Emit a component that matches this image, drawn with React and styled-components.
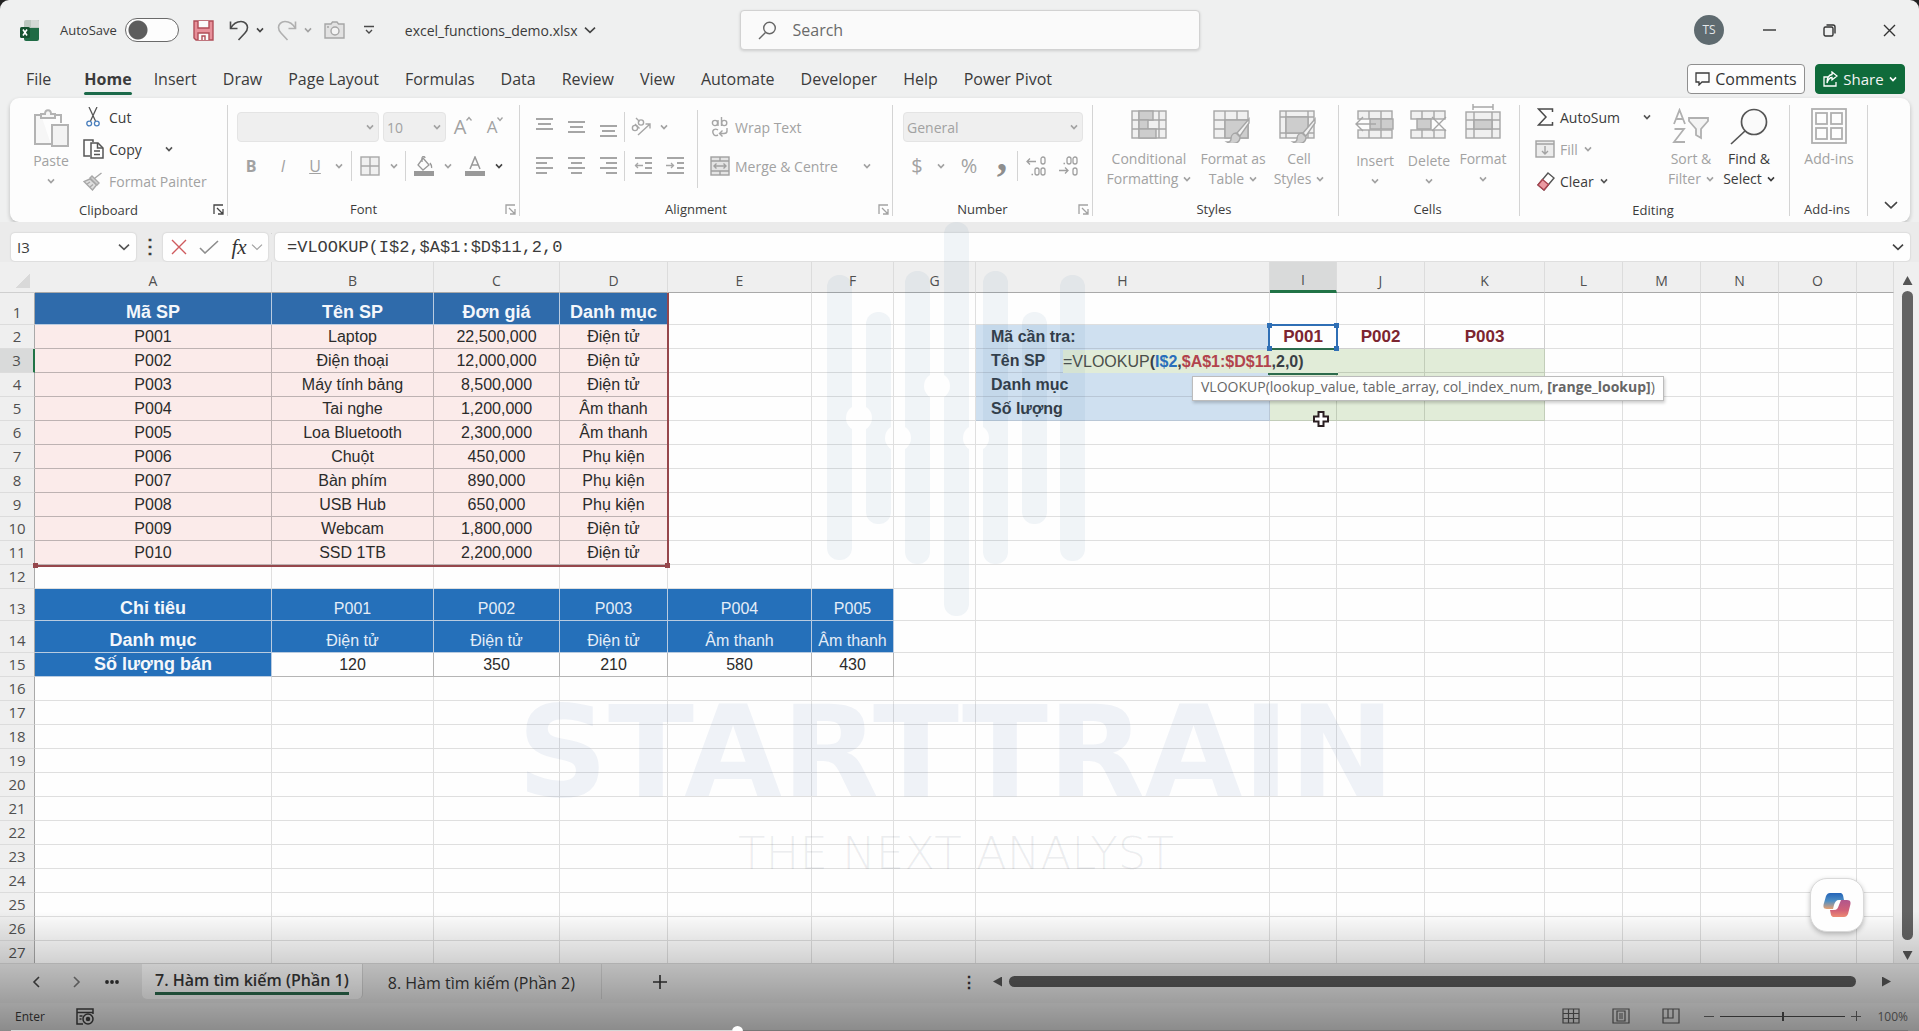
import React from 'react';
import styled, { createGlobalStyle, css } from 'styled-components';

const INK = '#3b3b3b';
const DIM = '#a2a2a2';
const UI_FONT = '"Open Sans", "Noto Sans", sans-serif';
const CELL_FONT = '"Liberation Sans", Arial, sans-serif';

const GlobalStyle = createGlobalStyle`
  * {
    box-sizing: border-box;
  }

  html {
    background: #222;
  }

  body {
    margin: 0;
    font-family: ${UI_FONT};
    color: ${INK};
    overflow: hidden;
  }

  button,
  input,
  select {
    font: inherit;
    color: inherit;
    margin: 0;
    padding: 0;
    border: none;
    background: none;
    outline: none;
  }
`;

/* ---------- icons ---------- */

const Icon = ({ w = 20, h = 20, color = DIM, sw = 1.4, children }) => (
  <svg
    width={w}
    height={h}
    viewBox={`0 0 ${w} ${h}`}
    fill="none"
    stroke={color}
    strokeWidth={sw}
    aria-hidden="true"
  >
    {children}
  </svg>
);

const Chevron = ({ color = DIM, size = 8, sw = 1.6 }) => (
  <Icon w={size} h={size} color={color} sw={sw}>
    <path d={`M1 ${size * 0.3} L${size / 2} ${size * 0.7} L${size - 1} ${size * 0.3}`} />
  </Icon>
);

const ExcelIcon = () => (
  <svg width="20" height="21" viewBox="0 0 20 21" aria-hidden="true">
    <path d="M4 2a2 2 0 0 1 2-2h13v8H4z" fill="#bcc8c0" />
    <path d="M11 0h6a2 2 0 0 1 2 2v5h-8z" fill="#d3d9d5" />
    <path d="M4 8h15v11a2 2 0 0 1-2 2H6a2 2 0 0 1-2-2z" fill="#1f6b45" />
    <rect x="0" y="7" width="10" height="11" rx="1.5" fill="#14512f" />
    <path d="M3 9.5l4 6M7 9.5l-4 6" stroke="#fff" strokeWidth="1.6" />
  </svg>
);

const SaveIcon = () => (
  <Icon w={21} h={21} color="#b04c57" sw={1.4}>
    <path d="M1 1h19v19H3l-2-2z" fill="#e7909a" />
    <path d="M5 1v7h11V1" fill="#fafafa" />
    <path d="M5 20v-7h11v7" fill="#fafafa" />
    <path d="M9 20v-4h3v4" />
  </Icon>
);

const UndoIcon = () => (
  <Icon w={20} h={21} color="#4a4a4a" sw={1.6}>
    <path d="M1.500 1.500v7h7" />
    <path d="M1.500 8.500C4 4 8 1.500 12 1.500c4 0 6.500 3 6.500 6 0 2-.7 3.500-2.500 5.500l-6.500 7" />
  </Icon>
);

const RedoIcon = () => (
  <Icon w={20} h={21} color="#b0b0b0" sw={1.6}>
    <path d="M18.500 1.500v7h-7" />
    <path d="M18.500 8.500C16 4 12 1.500 8 1.500c-4 0-6.500 3-6.500 6 0 2 .7 3.500 2.500 5.500l6.500 7" />
  </Icon>
);

const CameraIcon = () => (
  <Icon w={21} h={18} color="#a6a6a6">
    <path d="M1 3h6l1.500-2H13l1.500 2H20v14H1z" fill="#e2e2e2" />
    <circle cx="11" cy="10" r="4" fill="#f4f4f4" />
    <path d="M3 6h2" />
  </Icon>
);

const CustomizeIcon = () => (
  <Icon w={10} h={10} color="#4a4a4a">
    <path d="M0 1.500h10M2 5l3 3 3-3" />
  </Icon>
);

const SearchIcon = () => (
  <Icon w={19} h={19} color="#666">
    <circle cx="11.500" cy="7" r="5.800" />
    <path d="M7.500 11.500L1 18" />
  </Icon>
);

const PasteIcon = () => (
  <Icon w={36} h={38} color="#b3b3b3" sw={2}>
    <path d="M8 6H2v29h16" fill="#f6f6f6" />
    <path d="M22 6h6v8" />
    <path d="M8 9V5h4c0-5 6-5 6 0h4v4z" fill="#f6f6f6" />
    <rect x="19" y="16" width="16" height="21" fill="#f3f3f3" />
  </Icon>
);

const CutIcon = () => (
  <Icon w={14} h={20} color="#555" sw={1.3}>
    <path d="M3 0l6.500 14M11 0L4.500 14" />
    <circle cx="3.200" cy="16.500" r="2.400" stroke="#4a7fbd" />
    <circle cx="10.800" cy="16.500" r="2.400" stroke="#4a7fbd" />
  </Icon>
);

const CopyIcon = () => (
  <Icon w={21} h={20} color="#555" sw={1.5}>
    <path d="M7 17H1V1h9v2" />
    <path d="M8 4h7l5 5v10H8z" fill="#fff" />
    <path d="M14.500 4v5H20M11 12h6M11 15.500h6" />
  </Icon>
);

const PainterIcon = () => (
  <Icon w={20} h={19} color="#a8a8a8" sw={1.4}>
    <path d="M18.500 1L12 6M9 4l7 7-2 2-7-7z" fill="#cfcfcf" />
    <path d="M7 7L1 9.500l8.500 8.500 4-5z" fill="#dedede" />
    <path d="M4 12l3-2M7 15l3-2.500" />
  </Icon>
);

const BordersIcon = () => (
  <Icon w={20} h={20} color="#a8a8a8">
    <rect x="1" y="1" width="18" height="18" fill="#f0f0f0" />
    <path d="M10 1v18M1 10h18" />
  </Icon>
);

const BucketIcon = () => (
  <Icon w={20} h={20} color="#999" sw={1.3}>
    <path d="M9 2l6 7-6 5-5-5z" />
    <path d="M8 6V2c0-2 3-2 3 0M16 7c1.500 2 2 3 1.500 5" />
    <path d="M0 17.500h20" strokeWidth="5" />
  </Icon>
);

const FontColorIcon = () => (
  <Icon w={20} h={20} color="#999" sw={1.5}>
    <path d="M5 13L10 1l5 12M6.500 9h7" />
    <path d="M0 17.500h20" strokeWidth="5" />
  </Icon>
);

const LinesIcon = ({ lines, arrow }) => (
  <Icon w={19} h={20} color="#a6a6a6" sw={2}>
    {lines.map(([x1, x2, y]) => (
      <path key={y} d={`M${x1} ${y}H${x2}`} />
    ))}
    {arrow && <path d={arrow} strokeWidth="1.300" />}
  </Icon>
);

const TOP = [[1, 18, 2], [3, 16, 7], [1, 18, 12]];
const MIDDLE = [[1, 18, 5], [3, 16, 10], [1, 18, 15]];
const BOTTOM = [[1, 18, 9], [3, 16, 14], [1, 18, 19]];
const LEFT = [[1, 18, 2], [1, 12, 7], [1, 18, 12], [1, 12, 17]];
const CENTRE = [[1, 18, 2], [4, 15, 7], [1, 18, 12], [4, 15, 17]];
const RIGHT = [[1, 18, 2], [7, 18, 7], [1, 18, 12], [7, 18, 17]];
const INDENT = [[1, 18, 2], [11, 18, 7], [11, 18, 12], [1, 18, 17]];

const OrientationIcon = () => (
  <Icon w={22} h={20} color="#a6a6a6" sw={1.4}>
    <circle cx="5" cy="11" r="2.600" />
    <path d="M5 7l4.500 4.500" />
    <circle cx="11" cy="5.500" r="2.600" />
    <path d="M6 1l3.500 3.500M8 18L20 7M15.500 7H20v4.500" />
  </Icon>
);

const WrapIcon = () => (
  <Icon w={18} h={20} color="#a6a6a6" sw={1.4}>
    <circle cx="4" cy="6" r="2.600" />
    <path d="M7 3v6M10.500 0v9" />
    <circle cx="13.200" cy="6" r="2.600" />
    <path d="M7 13c-3-2-6 0-5 3s3 3 5 2M16 11v3c0 2-1 2.500-3 2.500H9M11.500 13.500l-3 3 3 3" />
  </Icon>
);

const MergeIcon = () => (
  <Icon w={20} h={20} color="#a0a0a0">
    <rect x="1" y="1" width="18" height="18" fill="#e4e4e4" />
    <path d="M1 5h18M1 15h18M10 1v4M10 15v4M4 10h12M6.500 7.500L4 10l2.500 2.500M13.500 7.500L16 10l-2.500 2.500" />
  </Icon>
);

const DecimalIcon = ({ more }) => (
  <Icon w={20} h={20} color="#a0a0a0" sw={1.3}>
    <path d={more ? 'M1 5.500h9M4 2.500L1 5.500l3 3' : 'M1 14.500h9M7 11.500l3 3-3 3'} />
    <rect x="15" y="1" width="4" height="7" rx="2" />
    <rect x="15" y="12" width="4" height="7" rx="2" />
    {more ? <rect x="9" y="12" width="4" height="7" rx="2" /> : <rect x="9" y="1" width="4" height="7" rx="2" />}
    <path d={more ? 'M5.500 18.500h1.500' : 'M5.500 7.500h1.500'} />
  </Icon>
);

const BRUSH = (
  <>
    <path d="M36 10L24 24l3 3 9-13z" fill="#f2f2f2" />
    <path d="M23 24c-4 0-5 4-5 6s-2 3-4 3c5 3 13 2 13-5z" fill="#cfcfcf" />
  </>
);

const ConditionalIcon = () => (
  <Icon w={36} h={34} color="#a6a6a6">
    <rect x="1" y="2" width="34" height="27" fill="#f0f0f0" />
    <path d="M1 11h34M1 20h34M8 2v27M28 2v27" />
    <rect x="8" y="2" width="14" height="9" fill="#cdcdcd" />
    <rect x="8" y="11" width="9" height="9" fill="#cdcdcd" />
    <rect x="8" y="20" width="17" height="9" fill="#cdcdcd" />
  </Icon>
);

const FormatTableIcon = () => (
  <Icon w={40} h={34} color="#a6a6a6">
    <rect x="1" y="2" width="34" height="27" fill="#f0f0f0" />
    <path d="M1 11h34M1 20h34M12 2v27M24 2v27" />
    <path d="M12 11h23v18H12z" fill="#cdcdcd" />
    {BRUSH}
  </Icon>
);

const CellStylesIcon = () => (
  <Icon w={40} h={34} color="#a6a6a6">
    <rect x="1" y="2" width="34" height="27" fill="#f0f0f0" />
    <path d="M1 8h34M7 2v27M29 2v27M1 24h34" />
    <rect x="7" y="8" width="22" height="16" fill="#cdcdcd" />
    {BRUSH}
  </Icon>
);

const InsertIcon = () => (
  <Icon w={40} h={34} color="#a6a6a6">
    <rect x="3" y="2" width="34" height="8" fill="#f0f0f0" />
    <rect x="3" y="21" width="34" height="8" fill="#f0f0f0" />
    <path d="M14 2v8M26 2v8M14 21v8M26 21v8" />
    <rect x="15" y="10" width="23" height="10" fill="#cdcdcd" />
    <path d="M26 10v10M1 15h20M8 8l-7 7 7 7" />
  </Icon>
);

const DeleteIcon = () => (
  <Icon w={40} h={34} color="#a6a6a6">
    <rect x="2" y="2" width="34" height="8" fill="#f0f0f0" />
    <rect x="2" y="21" width="34" height="8" fill="#f0f0f0" />
    <path d="M13 2v8M25 2v8M13 21v8M25 21v8" />
    <rect x="8" y="10" width="14" height="10" fill="#cdcdcd" />
    <path d="M23 8l14 14M37 8L23 22" />
  </Icon>
);

const FormatIcon = () => (
  <Icon w={36} h={39} color="#a6a6a6">
    <path d="M8 3h20M8 0v6M28 0v6" />
    <rect x="1" y="8" width="34" height="26" fill="#f0f0f0" />
    <path d="M1 16h34M1 25h34M9 8v26M27 8v26" />
    <rect x="9" y="16" width="18" height="9" fill="#cdcdcd" />
  </Icon>
);

const SigmaIcon = () => (
  <Icon w={17} h={18} color="#4a4a4a" sw={1.5}>
    <path d="M15.500 4V1H1.500L9 9l-7.500 8h14v-3" />
  </Icon>
);

const FillIcon = () => (
  <Icon w={20} h={18} color={DIM}>
    <rect x="1" y="1" width="18" height="16" fill="#ececec" />
    <path d="M1 4h18M10 6v8M7 11l3 3 3-3" />
  </Icon>
);

const EraserIcon = () => (
  <Icon w={19} h={19} color="#555">
    <path d="M12 1l6 5L8 18l-6-5z" fill="#fff" />
    <path d="M6.500 7.500l6 5L8 18l-6-5z" fill="#eb9aa2" stroke="#a8434f" />
  </Icon>
);

const SortIcon = () => (
  <Icon w={38} h={36} color="#b0b0b0" sw={1.8}>
    <path d="M2 16L7.500 2 13 16M4 11h7M2.500 21H12L2 34h11" />
    <path d="M17 10h19v3l-7 8v9l-5-3v-6l-7-8z" fill="#f4f4f4" />
  </Icon>
);

const FindIcon = () => (
  <Icon w={38} h={37} color="#555" sw={1.7}>
    <circle cx="24" cy="14" r="12.500" fill="#fafafa" />
    <path d="M15 23L1 36" />
  </Icon>
);

const AddinsIcon = () => (
  <Icon w={36} h={36} color="#b0b0b0" sw={1.8}>
    <rect x="1" y="1" width="34" height="34" />
    <rect x="5" y="5" width="11" height="11" />
    <rect x="20" y="5" width="11" height="11" />
    <rect x="5" y="20" width="11" height="11" />
    <rect x="20" y="20" width="11" height="11" />
  </Icon>
);

const LauncherIcon = ({ color }) => (
  <Icon w={11} h={11} color={color} sw={1.3}>
    <path d="M1 10V1h9M4 4l6 6M10 5v5H5" />
  </Icon>
);

const CommentIcon = () => (
  <Icon w={15} h={14} color="#3b3b3b" sw={1.3}>
    <path d="M1 1h13v9H7l-3 3v-3H1z" />
  </Icon>
);

const ShareIcon = () => (
  <Icon w={15} h={16} color="#fff" sw={1.3}>
    <path d="M5 6H1v9h12v-4" />
    <path d="M9 1l5 4-5 4V6.500C6 6.500 5 9 4 12c0-5 1-8 5-8.500z" />
  </Icon>
);

const CopilotIcon = () => (
  <svg width="28" height="26" viewBox="0 0 28 26" aria-hidden="true">
    <defs>
      <linearGradient id="cpBlue" x1="0" y1="0" x2="0" y2="1">
        <stop offset="0" stopColor="#2464b8" />
        <stop offset="0.5" stopColor="#4f8fc4" />
        <stop offset="1" stopColor="#e8a070" />
      </linearGradient>
      <linearGradient id="cpPink" x1="0" y1="0" x2="0" y2="1">
        <stop offset="0" stopColor="#b0568c" />
        <stop offset="0.6" stopColor="#d06078" />
        <stop offset="1" stopColor="#ee8a72" />
      </linearGradient>
    </defs>
    <path d="M7 1h10c3 0 3 2 4 7h-5c-3 0-4 2-5 5l-1 4H4c-4 0-4-3-3-6l2-7c1-2 2-3 4-3z" fill="url(#cpBlue)" />
    <path d="M21 25H11c-3 0-3-2-4-7h4c3 0 4-2 5-5l2-5h6c4 0 4 3 3 6l-2 8c-1 2-2 3-4 3z" fill="url(#cpPink)" />
  </svg>
);

const MacroIcon = () => (
  <Icon w={18} h={17} color="#3f3f3f" sw={1.5}>
    <path d="M7 16H1V1h16v5M1 4.500h16M3.500 8h3M3.500 11h2" />
    <circle cx="12" cy="11" r="5" />
    <circle cx="12" cy="11" r="1.500" fill="#3f3f3f" />
  </Icon>
);

const NormalViewIcon = () => (
  <Icon w={18} h={16} color="#5e5e5e" sw={1.2}>
    <path d="M1 1h16v14H1zM1 5.500h16M1 10.500h16M6.500 1v14M11.500 1v14" />
  </Icon>
);

const PageViewIcon = () => (
  <Icon w={18} h={16} color="#5e5e5e" sw={1.2}>
    <path d="M1 1h16v14H1zM5 3h8v10H5zM7 6h4M7 8h4M7 10h4" />
  </Icon>
);

const BreakViewIcon = () => (
  <Icon w={18} h={16} color="#5e5e5e" sw={1.2}>
    <path d="M1 1h16v14H1zM6 1v9H1M11 1v9H6" />
  </Icon>
);

/* ---------- title bar and tabs ---------- */

const Window = styled.div`
  position: relative;
  display: flex;
  flex-direction: column;
  height: 100vh;
  background: #eff0f0;
  border-radius: 9px 9px 0 0;
  overflow: hidden;
`;

const TitleBar = styled.header`
  display: grid;
  grid-template-columns: minmax(0, 1fr) 460px minmax(0, 1fr);
  align-items: center;
  height: 60px;
  padding-left: 20px;
`;

const QuickAccess = styled.div`
  display: flex;
  align-items: center;
  font-size: 13px;
`;

const AutoSave = styled.label`
  display: flex;
  align-items: center;
  gap: 8px;
  margin: 0 4px 0 20px;
`;

const Toggle = styled.input`
  appearance: none;
  width: 54px;
  height: 24px;
  border: 1px solid #6a6a6a;
  border-radius: 12px;
  background: radial-gradient(circle at 12px 11px, #5d5d5d 9px, #fdfdfd 10px);
`;

const SplitButton = styled.div`
  display: flex;
  margin-right: 6px;
`;

const IconButton = styled.button`
  display: inline-flex;
  align-items: center;
  justify-content: center;
  flex: none;
  width: ${({ $w }) => $w || 20}px;
  height: ${({ $h }) => $h || 30}px;
  color: ${({ $color }) => $color || DIM};
`;

const FileName = styled.button`
  display: flex;
  align-items: center;
  gap: 6px;
  margin-left: 17px;
  font-size: 14px;
`;

const SearchBox = styled.label`
  display: flex;
  align-items: center;
  gap: 16px;
  height: 40px;
  padding: 0 17px;
  background: #fafafa;
  border: 1px solid #d2d2d2;
  border-radius: 4px;
  box-shadow: 0 1px 3px rgba(0, 0, 0, 0.15);

  input {
    flex: 1;
    font-size: 16px;

    &::placeholder {
      color: #6a6a6a;
      opacity: 1;
    }
  }
`;

const WindowControls = styled.div`
  display: flex;
  justify-content: flex-end;
`;

const Avatar = styled.span`
  width: 30px;
  height: 30px;
  border-radius: 50%;
  background: #5f6b70;
  color: #e4e8ea;
  font-size: 12px;
  line-height: 30px;
  text-align: center;
`;

const TabRow = styled.nav`
  display: flex;
  align-items: center;
  height: 38px;
  padding: 0 14px 0 26px;
`;

const RibbonTab = styled.a`
  position: relative;
  margin-right: 26px;
  color: ${INK};
  font-size: 16px;
  line-height: 40px;
  text-decoration: none;
  white-space: nowrap;

  ${({ $active }) =>
    $active &&
    css`
      margin-left: 7px;
      margin-right: 22px;
      font-weight: 700;

      &::after {
        content: '';
        position: absolute;
        left: 0;
        right: 0;
        bottom: 4px;
        height: 3px;
        background: #1c6a4a;
        border-radius: 2px;
      }
    `}
`;

const TabAction = styled.button`
  display: flex;
  align-items: center;
  justify-content: center;
  gap: 5px;
  width: ${({ $primary }) => ($primary ? 90 : 118)}px;
  height: 30px;
  margin-left: ${({ $primary }) => ($primary ? '10px' : 'auto')};
  border: 1px solid ${({ $primary }) => ($primary ? '#0f6b3b' : '#8f8f8f')};
  border-radius: 4px;
  background: ${({ $primary }) => ($primary ? '#0f6b3b' : '#fdfdfd')};
  color: ${({ $primary }) => ($primary ? '#f4f4f4' : '#333')};
  font-size: ${({ $primary }) => ($primary ? 15 : 16)}px;
`;

/* ---------- ribbon ---------- */

const Ribbon = styled.section`
  display: flex;
  height: 124px;
  margin: 0 9px 0 10px;
  background: #fdfdfd;
  border-radius: 9px;
  box-shadow: 0 2px 4px rgba(0, 0, 0, 0.22);
`;

const GroupBox = styled.div`
  position: relative;
  display: flex;
  flex-direction: column;
  flex: none;
  width: ${({ $w }) => $w}px;
  background: linear-gradient(#d4d4d4, #d4d4d4) right 7px / 1px 111px no-repeat;
`;

const GroupBody = styled.div`
  display: flex;
  flex: 1;
  align-items: flex-start;
  padding: 3px 0 0 ${({ $pad }) => $pad || 0}px;
`;

const GroupLabel = styled.div`
  display: flex;
  align-items: center;
  gap: 6px;
  height: 26px;
  padding-right: 4px;
  font-size: 13px;

  span {
    flex: 1;
    text-align: center;
  }
`;

const Group = ({ label, width, pad, launcher, children }) => (
  <GroupBox $w={width}>
    <GroupBody $pad={pad}>{children}</GroupBody>
    <GroupLabel>
      <span>{label}</span>
      {launcher && (
        <IconButton $w={11} $h={11} aria-label={`${label} settings`}>
          <LauncherIcon color={launcher} />
        </IconButton>
      )}
    </GroupLabel>
  </GroupBox>
);

const BigButton = styled.button`
  display: flex;
  flex-direction: column;
  align-items: center;
  flex: none;
  width: ${({ $w }) => $w}px;
  height: ${({ $h }) => $h || 88}px;
  padding-top: ${({ $top }) => $top || 8}px;
  color: ${({ $color }) => $color || DIM};
  font-size: 14px;
  line-height: 20px;
  white-space: nowrap;

  svg {
    flex: none;
  }

  .text {
    margin-top: auto;
  }

  .line {
    display: flex;
    align-items: center;
    justify-content: center;
    gap: 5px;
    height: 20px;
  }
`;

const Big = ({ icon, lines, ...rest }) => (
  <BigButton {...rest}>
    {icon}
    <span className="text">
      {lines.map((line, i) => (
        <span className="line" key={line || i}>
          {line}
          {i === 1 && <Chevron color={rest.$color || DIM} />}
        </span>
      ))}
    </span>
  </BigButton>
);

const Stack = styled.div`
  display: flex;
  flex-direction: column;
  flex: none;
  width: ${({ $w }) => $w}px;
`;

const SmallButton = styled.button`
  display: flex;
  align-items: center;
  height: 32px;
  color: ${({ $color }) => $color || INK};
  font-size: 14px;
  white-space: nowrap;

  .icon {
    display: flex;
    justify-content: center;
    width: ${({ $icon }) => $icon || 20}px;
    margin-right: 5px;
  }

  .chevron {
    display: flex;
    margin-left: ${({ $gap }) => $gap || 6}px;
  }
`;

const Rows = styled.div`
  display: flex;
  flex-direction: column;
  gap: 9px;
  padding-top: 11px;
`;

const Row = styled.div`
  display: flex;
  align-items: center;
  height: 30px;

  b,
  i,
  u {
    font-size: 16px;
  }
`;

const Divider = styled.span`
  flex: none;
  width: 1px;
  height: ${({ $h }) => $h || 30}px;
  margin: ${({ $margin }) => $margin || '0 3px 0 2px'};
  background: #d4d4d4;
`;

const SelectBox = styled.label`
  position: relative;
  display: flex;
  align-items: center;
  width: ${({ $w }) => $w}px;
  height: 30px;
  margin-right: 4px;
  background: #efefef;
  border: 1px solid #e4e4e4;
  border-radius: 4px;

  select {
    appearance: none;
    width: 100%;
    padding-left: 3px;
    color: ${DIM};
    font-size: 14px;
    opacity: 1;
  }

  svg {
    position: absolute;
    right: 4px;
  }
`;

const Dropdown = ({ width, value, label }) => (
  <SelectBox $w={width}>
    <select aria-label={label} defaultValue={value}>
      <option>{value}</option>
    </select>
    <Chevron />
  </SelectBox>
);

const FontSizeGlyph = styled.span`
  display: flex;
  font-size: ${({ $size }) => $size}px;
  line-height: 26px;

  svg {
    margin-top: 2px;
  }
`;

const Symbol = styled.span`
  font-size: 20px;
  line-height: 30px;
`;

const Comma = styled.span`
  height: 30px;
  font-family: 'Liberation Serif', serif;
  font-size: 42px;
  font-weight: 700;
  line-height: 10px;
  color: #8e8e8e;
`;

const CollapseButton = styled.button`
  align-self: flex-end;
  margin-left: auto;
  padding: 0 12px 5px 0;
`;

/* ---------- formula bar ---------- */

const FormulaBar = styled.div`
  display: flex;
  align-items: stretch;
  height: 40px;
  padding: 11px 9px 1px 11px;
  background: #ebebeb;
`;

const Field = styled.div`
  display: flex;
  align-items: center;
  width: ${({ $w }) => ($w ? `${$w}px` : 'auto')};
  flex: ${({ $w }) => ($w ? 'none' : '1')};
  padding: 0 ${({ $pad }) => ($pad === undefined ? 6 : $pad)}px;
  background: #fefefe;
  border-radius: 4px;
  box-shadow: 0 0 2px rgba(0, 0, 0, 0.2);

  input {
    flex: 1;
    min-width: 0;
    font-size: 15px;
  }
`;

const FormulaInput = styled.input`
  && {
    padding-left: 6px;
    font-family: 'Liberation Mono', 'Courier New', monospace;
    font-size: 17px;
  }
`;

const Dots = styled.span`
  width: 27px;
  font-size: 20px;
  line-height: 26px;
  font-weight: 700;
  text-align: center;
`;

const Fx = styled.i`
  font-family: 'Liberation Serif', 'Times New Roman', serif;
  font-size: 21px;
  color: #333;
`;

/* ---------- sheet ---------- */

const Workspace = styled.div`
  display: flex;
  flex: 1;
  min-height: 0;
`;

const Sheet = styled.main`
  position: relative;
  flex: 1;
  min-width: 0;
  overflow: hidden;
  background: #fefefe;
`;

const Grid = styled.table`
  width: 100%;
  table-layout: fixed;
  border-collapse: separate;
  border-spacing: 0;
  font-family: ${CELL_FONT};
  font-size: 16px;
  line-height: 23px;
`;

const ColHead = styled.th`
  height: 31px;
  padding: 8px 0 0;
  border-right: 1px solid #dcdcdc;
  border-bottom: ${({ $on }) => ($on ? '3px solid #217346' : '1px solid #a9a9a9')};
  background: ${({ $on }) => ($on ? '#d9dada' : '#efefef')};
  color: #505050;
  font-family: ${UI_FONT};
  font-size: 14px;
  font-weight: 400;
  line-height: 20px;
  overflow: hidden;
`;

const Corner = styled.th`
  padding: 0;
  background: linear-gradient(135deg, #efefef 50%, #d9d9d9 50%) 16px 12px / 14px 14px no-repeat #efefef;
  border-bottom: 1px solid #cfcfcf;
`;

const RowHead = styled.th`
  height: ${({ $h }) => $h}px;
  padding: 0;
  border-right: ${({ $on }) => ($on ? '2px solid #217346' : '1px solid #a9a9a9')};
  border-bottom: 1px solid #dcdcdc;
  background: ${({ $on }) => ($on ? '#d9dada' : '#efefef')};
  color: #505050;
  font-family: ${UI_FONT};
  font-size: 15px;
  font-weight: 400;
  vertical-align: bottom;
`;

const cellLook = {
  head: css`
    background: #2f6bab;
    border-color: #b9cbe0;
    color: #f4f7fb;
    font-size: 18px;
    font-weight: 700;
  `,
  pink: css`
    background: #fbebea;
    border-color: #bdb2b2;
  `,
  blueBold: css`
    background: #2570ba;
    border-color: #b9cbe0;
    color: #f4f7fb;
    font-size: 18px;
    font-weight: 700;
  `,
  blue: css`
    background: #2570ba;
    border-color: #b9cbe0;
    color: #e4edf7;
  `,
  boxed: css`
    border-color: #b5b5b5;
  `,
  label: css`
    background: #cfe0f0;
    border-color: #b9c7d6;
    color: #333c47;
    font-weight: 700;
    text-align: left;
    padding-left: 15px;
  `,
  key: css`
    border-color: #cfcfcf;
    color: #7c2530;
    font-size: 17px;
    font-weight: 700;
  `,
  green: css`
    background: #e1ecd8;
    border-color: #c2cdb9;
  `,
};

const Cell = styled.td`
  padding: 0;
  border: solid #dfdfdf;
  border-width: 0 1px 1px 0;
  color: #2b2b2b;
  text-align: center;
  vertical-align: bottom;
  white-space: nowrap;
  ${({ $look }) => cellLook[$look]}
`;

const COLUMNS = [
  ['A', 237], ['B', 162], ['C', 126], ['D', 108], ['E', 144], ['F', 82], ['G', 82], ['H', 294],
  ['I', 67], ['J', 88], ['K', 120], ['L', 78], ['M', 78], ['N', 78], ['O', 78], ['', null],
];

const PRODUCTS = [
  ['P001', 'Laptop', '22,500,000', 'Điện tử'],
  ['P002', 'Điện thoại', '12,000,000', 'Điện tử'],
  ['P003', 'Máy tính bảng', '8,500,000', 'Điện tử'],
  ['P004', 'Tai nghe', '1,200,000', 'Âm thanh'],
  ['P005', 'Loa Bluetooth', '2,300,000', 'Âm thanh'],
  ['P006', 'Chuột', '450,000', 'Phụ kiện'],
  ['P007', 'Bàn phím', '890,000', 'Phụ kiện'],
  ['P008', 'USB Hub', '650,000', 'Phụ kiện'],
  ['P009', 'Webcam', '1,800,000', 'Điện tử'],
  ['P010', 'SSD 1TB', '2,200,000', 'Điện tử'],
];

const cells = {};

const fill = (row, firstCol, values, look) => {
  values.forEach((value, i) => {
    cells[`${row}-${firstCol + i}`] = { value, look };
  });
};

fill(1, 0, ['Mã SP', 'Tên SP', 'Đơn giá', 'Danh mục'], 'head');
PRODUCTS.forEach((product, i) => fill(i + 2, 0, product, 'pink'));
fill(13, 0, ['Chỉ tiêu'], 'blueBold');
fill(14, 0, ['Danh mục'], 'blueBold');
fill(15, 0, ['Số lượng bán'], 'blueBold');
fill(13, 1, ['P001', 'P002', 'P003', 'P004', 'P005'], 'blue');
fill(14, 1, ['Điện tử', 'Điện tử', 'Điện tử', 'Âm thanh', 'Âm thanh'], 'blue');
fill(15, 1, ['120', '350', '210', '580', '430'], 'boxed');
fill(2, 7, ['Mã cần tra:'], 'label');
fill(3, 7, ['Tên SP'], 'label');
fill(4, 7, ['Danh mục'], 'label');
fill(5, 7, ['Số lượng'], 'label');
fill(2, 8, ['P001', 'P002', 'P003'], 'key');
[3, 4, 5].forEach((row) => fill(row, 8, ['', '', ''], 'green'));

const rowHeight = (row) => ([1, 13, 14].includes(row) ? 32 : 24);
const ROWS = Array.from({ length: 27 }, (_, i) => i + 1);

const RangeOutline = styled.div`
  position: absolute;
  left: 34px;
  top: 31px;
  width: 635px;
  height: 274px;
  border: solid #96474c;
  border-width: 0 2px 2px 0;

  &::before,
  &::after {
    content: '';
    position: absolute;
    bottom: -3px;
    width: 5px;
    height: 5px;
    background: #96474c;
  }

  &::before {
    left: -1px;
  }

  &::after {
    right: -3px;
  }
`;

const LookupOutline = styled.div`
  position: absolute;
  left: 1268px;
  top: 62px;
  width: 70px;
  height: 26px;
  border: 2px solid #2f6fb5;
  border-bottom-color: #2c6b4c;

  span {
    position: absolute;
    width: 5px;
    height: 5px;
    background: #2f6fb5;
  }

  span:nth-child(1) {
    left: -3px;
    top: -3px;
  }

  span:nth-child(2) {
    right: -3px;
    top: -3px;
  }

  span:nth-child(3) {
    left: -3px;
    bottom: -3px;
  }

  span:nth-child(4) {
    right: -3px;
    bottom: -3px;
  }
`;

const CellEditor = styled.div`
  position: absolute;
  left: 1063px;
  top: 88px;
  width: 275px;
  height: 23px;
  background: #e1ecd8;
  color: #4b4f4b;
  font-family: ${CELL_FONT};
  font-size: 16px;
  line-height: 23px;
  white-space: nowrap;

  b {
    color: #3a3f46;
  }

  .lookup {
    color: #2a6ebb;
  }

  .range {
    color: #b2434d;
  }
`;

const EditEdge = styled.div`
  position: absolute;
  left: 1268px;
  top: 111px;
  width: 70px;
  height: 2px;
  background: #2c6b4c;
`;

const SyntaxTip = styled.div`
  position: absolute;
  left: 1192px;
  top: 114px;
  height: 25px;
  padding: 0 8px;
  background: #fefefe;
  border: 1px solid #bcbcbc;
  box-shadow: 1px 2px 3px rgba(0, 0, 0, 0.2);
  color: #666;
  font-size: 14px;
  line-height: 20px;
  white-space: nowrap;
`;

const Cursor = styled.svg`
  position: absolute;
  left: 1313px;
  top: 149px;
`;

const Copilot = styled.button`
  position: absolute;
  right: 30px;
  bottom: 31px;
  z-index: 3;
  display: flex;
  align-items: center;
  justify-content: center;
  width: 54px;
  height: 54px;
  border: 1px solid #d9d9d9;
  border-radius: 17px;
  background: #fefefe;
  box-shadow: 0 2px 5px rgba(0, 0, 0, 0.25);
`;

const VerticalScroll = styled.div`
  display: flex;
  flex-direction: column;
  align-items: center;
  width: 25px;
  padding: 14px 0 3px 2px;
  background: #efefef;
`;

const Thumb = styled.div`
  flex: 1;
  border-radius: 6px;
  background: #636363;
  ${({ $vertical }) =>
    $vertical
      ? css`
          width: 11px;
          margin: 5px 0 10px;
        `
      : css`
          height: 11px;
          margin: 0 26px 0 7px;
          background: #5a5a5a;
        `}
`;

const Arrow = styled.button`
  width: 10px;
  height: 10px;
  background: #555;
  clip-path: polygon(${({ $points }) => $points});
`;

/* ---------- sheet tabs and status bar ---------- */

const SheetTabs = styled.div`
  display: flex;
  align-items: center;
  height: 40px;
  padding: 0 27px 4px 0;
  background: #e6e6e6;
  border-top: 1px solid #d6d6d6;
`;

const SheetTab = styled.button`
  height: 35px;
  padding: ${({ $active }) => ($active ? '0 13px' : '3px 26px 0 25px')};
  font-size: 16px;
  white-space: nowrap;
  color: #363636;
  border-right: 1px solid #cfcfcf;

  ${({ $active }) =>
    $active &&
    css`
      background: #f8f8f8;
      border-radius: 0 0 5px 5px;
      font-weight: 600;

      span {
        display: block;
        padding-bottom: 1px;
        border-bottom: 3px solid #2b6a4d;
      }
    `}
`;

const HorizontalScroll = styled.div`
  display: flex;
  align-items: center;
  width: 50%;
  margin-left: auto;
`;

const StatusBar = styled.footer`
  display: flex;
  align-items: center;
  height: 28px;
  padding: 0 11px 2px 15px;
  background: #ececec;
  font-size: 12px;
`;

const Views = styled.div`
  display: flex;
  align-items: center;
  gap: 32px;
  margin: 0 24px 0 auto;
`;

const ZoomSlider = styled.input`
  appearance: none;
  width: 125px;
  height: 16px;
  margin: 0 6px;
  background: linear-gradient(#4e4e4e, #4e4e4e) 0 8px / 100% 1px no-repeat;

  &::-webkit-slider-thumb {
    appearance: none;
    width: 2px;
    height: 9px;
    background: #4e4e4e;
  }
`;

const ZoomLevel = styled.span`
  margin-left: 16px;
  color: #6a6a6a;
`;

/* ---------- layers over the window ---------- */

const Watermark = styled.div`
  position: absolute;
  top: 222px;
  left: 0;
  right: 7px;
  display: flex;
  flex-direction: column;
  align-items: center;
  z-index: 2;
  color: rgba(45, 85, 150, 0.07);
  font-family: 'DejaVu Sans', sans-serif;
  white-space: nowrap;
  pointer-events: none;

  strong {
    margin-top: 63px;
    font-size: 126px;
    line-height: 148px;
  }

  span {
    color: rgba(70, 80, 100, 0.09);
    font-size: 45px;
    font-weight: 200;
    line-height: 54px;
  }
`;

const WATERMARK_BARS = [
  [0, 53, 285], [39, 90, 212], [78, 49, 293], [117, 0, 394], [156, 49, 293], [195, 90, 212], [233, 53, 286],
];

const WatermarkLogo = () => (
  <svg width="258" height="394" viewBox="0 0 258 394" aria-hidden="true">
    <defs>
      <mask id="knobs">
        <rect width="258" height="394" fill="#fff" />
        <circle cx="32" cy="196" r="13" />
        <circle cx="71" cy="216" r="13" />
        <circle cx="110" cy="164" r="13" />
        <circle cx="149" cy="216" r="13" />
      </mask>
    </defs>
    <g mask="url(#knobs)" fill="#2d6596" fillOpacity="0.065">
      {WATERMARK_BARS.map(([x, y, h]) => (
        <rect key={x} x={x} y={y} width="25" height={h} rx="12" />
      ))}
    </g>
  </svg>
);

const Shade = styled.div`
  position: absolute;
  left: 0;
  right: 0;
  bottom: 0;
  height: 120px;
  z-index: 2;
  background: linear-gradient(rgba(0, 0, 0, 0), rgba(0, 0, 0, 0.19) 46%, rgba(0, 0, 0, 0.41));
  pointer-events: none;
`;

const Progress = styled.div`
  position: absolute;
  left: 11px;
  right: 11px;
  bottom: 0;
  height: 1px;
  z-index: 3;
  background: linear-gradient(90deg, #d6d6d6 38%, #777 38%);

  &::after {
    content: '';
    position: absolute;
    left: 38%;
    top: -4px;
    width: 11px;
    height: 11px;
    border-radius: 50%;
    background: #fff;
  }
`;

const TABS = [
  'File', 'Home', 'Insert', 'Draw', 'Page Layout', 'Formulas', 'Data', 'Review', 'View',
  'Automate', 'Developer', 'Help', 'Power Pivot',
];

const Small = ({ icon, text, chevron, iconWidth, gap, color }) => (
  <SmallButton $color={color} $icon={iconWidth} $gap={gap}>
    <span className="icon">{icon}</span>
    {text}
    {chevron && (
      <span className="chevron">
        <Chevron color={color || '#555'} />
      </span>
    )}
  </SmallButton>
);

const Chev = ({ w = 20, color }) => (
  <IconButton $w={w} aria-label="More options">
    <Chevron color={color} />
  </IconButton>
);

const RibbonPanel = () => (
  <Ribbon>
    <Group label="Clipboard" width={218} pad={10} launcher="#444">
      <Big $w={62} $h={90} icon={<PasteIcon />} lines={['Paste', '']} />
      <Stack $w={136}>
        <Small icon={<CutIcon />} text="Cut" iconWidth={22} />
        <Small icon={<CopyIcon />} text="Copy" iconWidth={22} chevron gap={23} />
        <Small icon={<PainterIcon />} text="Format Painter" iconWidth={22} color={DIM} />
      </Stack>
    </Group>

    <Group label="Font" width={292} pad={9} launcher={DIM}>
      <Rows>
        <Row>
          <Dropdown width={142} value="" label="Font name" />
          <Dropdown width={63} value="10" label="Font size" />
          <IconButton $w={26} aria-label="Increase font size">
            <FontSizeGlyph $size={20}>
              A<Icon w={6} h={6} sw={1.3}><path d="M0.500 4.500L3 1.500l2.500 3" /></Icon>
            </FontSizeGlyph>
          </IconButton>
          <IconButton $w={38} aria-label="Decrease font size">
            <FontSizeGlyph $size={17}>
              A<Icon w={6} h={6} sw={1.3}><path d="M0.500 1.500L3 4.500l2.500-3" /></Icon>
            </FontSizeGlyph>
          </IconButton>
        </Row>
        <Row>
          <IconButton $w={28}><b>B</b></IconButton>
          <IconButton $w={36}><i>I</i></IconButton>
          <IconButton $w={28}><u>U</u></IconButton>
          <Chev />
          <Divider />
          <IconButton $w={30} aria-label="Borders"><BordersIcon /></IconButton>
          <Chev w={18} />
          <Divider />
          <IconButton $w={30} aria-label="Fill colour"><BucketIcon /></IconButton>
          <Chev w={18} />
          <IconButton $w={36} aria-label="Font colour"><FontColorIcon /></IconButton>
          <Chev w={12} color="#444" />
        </Row>
      </Rows>
    </Group>

    <Group label="Alignment" width={373} pad={8} launcher={DIM}>
      <Rows>
        <Row>
          <IconButton $w={32} aria-label="Top align"><LinesIcon lines={TOP} /></IconButton>
          <IconButton $w={32} aria-label="Middle align"><LinesIcon lines={MIDDLE} /></IconButton>
          <IconButton $w={32} aria-label="Bottom align"><LinesIcon lines={BOTTOM} /></IconButton>
          <Divider $margin="0 3px 0 0" />
          <IconButton $w={26} aria-label="Orientation"><OrientationIcon /></IconButton>
          <Chev />
        </Row>
        <Row>
          <IconButton $w={32} aria-label="Align left"><LinesIcon lines={LEFT} /></IconButton>
          <IconButton $w={32} aria-label="Centre"><LinesIcon lines={CENTRE} /></IconButton>
          <IconButton $w={32} aria-label="Align right"><LinesIcon lines={RIGHT} /></IconButton>
          <Divider $margin="0 3px 0 0" />
          <IconButton $w={30} aria-label="Decrease indent">
            <LinesIcon lines={INDENT} arrow="M1 9.500h8M4 7L1.500 9.500 4 12" />
          </IconButton>
          <IconButton $w={34} aria-label="Increase indent">
            <LinesIcon lines={INDENT} arrow="M0 9.500h8M5 7l2.500 2.500L5 12" />
          </IconButton>
        </Row>
      </Rows>
      <Divider $h={78} $margin="9px 12px 0 5px" />
      <Rows>
        <Row><Small icon={<WrapIcon />} text="Wrap Text" color={DIM} /></Row>
        <Row><Small icon={<MergeIcon />} text="Merge & Centre" color={DIM} chevron gap={25} /></Row>
      </Rows>
    </Group>

    <Group label="Number" width={200} pad={10} launcher={DIM}>
      <Rows>
        <Row><Dropdown width={180} value="General" label="Number format" /></Row>
        <Row>
          <IconButton $w={28}><Symbol>$</Symbol></IconButton>
          <Chev />
          <IconButton $w={36}><Symbol>%</Symbol></IconButton>
          <IconButton $w={30}><Comma>,</Comma></IconButton>
          <Divider $margin="0" />
          <IconButton $w={36} aria-label="Increase decimal"><DecimalIcon more /></IconButton>
          <IconButton $w={28} aria-label="Decrease decimal"><DecimalIcon /></IconButton>
        </Row>
      </Rows>
    </Group>

    <Group label="Styles" width={246} pad={10}>
      <Big $w={92} icon={<ConditionalIcon />} lines={['Conditional', 'Formatting']} />
      <Big $w={76} icon={<FormatTableIcon />} lines={['Format as', 'Table']} />
      <Big $w={56} icon={<CellStylesIcon />} lines={['Cell', 'Styles']} />
    </Group>

    <Group label="Cells" width={181} pad={9}>
      <Big $w={54} $h={90} icon={<InsertIcon />} lines={['Insert', '']} />
      <Big $w={54} $h={90} icon={<DeleteIcon />} lines={['Delete', '']} />
      <Big $w={54} $top={3} icon={<FormatIcon />} lines={['Format', '']} />
    </Group>

    <Group label="Editing" width={270} pad={15}>
      <Stack $w={126}>
        <Small icon={<SigmaIcon />} text="AutoSum" chevron gap={23} />
        <Small icon={<FillIcon />} text="Fill" chevron color={DIM} />
        <Small icon={<EraserIcon />} text="Clear" chevron />
      </Stack>
      <Big $w={60} $top={7} icon={<SortIcon />} lines={['Sort &', 'Filter']} />
      <Big $w={56} $top={7} $color={INK} icon={<FindIcon />} lines={['Find &', 'Select']} />
    </Group>

    <Group label="Add-ins" width={78} pad={4}>
      <BigButton $w={70} $top={7}>
        <AddinsIcon />
        <span className="text">
          <span className="line">Add-ins</span>
          <span className="line" />
        </span>
      </BigButton>
    </Group>

    <CollapseButton aria-label="Collapse ribbon">
      <Chevron size={14} color="#444" />
    </CollapseButton>
  </Ribbon>
);

const SheetGrid = () => (
  <Grid>
    <colgroup>
      <col width="35" />
      {COLUMNS.map(([name, width], i) => (
        <col key={name || i} width={width || undefined} />
      ))}
    </colgroup>
    <thead>
      <tr>
        <Corner />
        {COLUMNS.map(([name], i) => (
          <ColHead key={name || i} $on={name === 'I'}>{name}</ColHead>
        ))}
      </tr>
    </thead>
    <tbody>
      {ROWS.map((row) => (
        <tr key={row}>
          <RowHead $h={rowHeight(row)} $on={row === 3}>{row}</RowHead>
          {COLUMNS.map(([name], col) => {
            const cell = cells[`${row}-${col}`] || {};
            return <Cell key={name || col} $look={cell.look}>{cell.value}</Cell>;
          })}
        </tr>
      ))}
    </tbody>
  </Grid>
);

const App = () => (
  <Window>
    <GlobalStyle />

    <TitleBar>
      <QuickAccess>
        <ExcelIcon />
        <AutoSave>
          AutoSave
          <Toggle type="checkbox" />
        </AutoSave>
        <IconButton $w={41} aria-label="Save"><SaveIcon /></IconButton>
        <SplitButton>
          <IconButton $w={30} aria-label="Undo"><UndoIcon /></IconButton>
          <Chev w={12} color="#444" />
        </SplitButton>
        <SplitButton>
          <IconButton $w={30} aria-label="Redo"><RedoIcon /></IconButton>
          <Chev w={12} />
        </SplitButton>
        <IconButton $w={30} aria-label="Camera"><CameraIcon /></IconButton>
        <IconButton $w={38} aria-label="Customise toolbar"><CustomizeIcon /></IconButton>
        <FileName>
          excel_functions_demo.xlsx
          <Chevron size={12} color="#444" />
        </FileName>
      </QuickAccess>
      <SearchBox>
        <SearchIcon />
        <input type="text" placeholder="Search" aria-label="Search" />
      </SearchBox>
      <WindowControls>
        <IconButton $w={60}><Avatar>TS</Avatar></IconButton>
        <IconButton $w={60} aria-label="Minimise">
          <Icon w={13} h={13} color="#333"><path d="M0 6h13" /></Icon>
        </IconButton>
        <IconButton $w={60} aria-label="Restore">
          <Icon w={13} h={13} color="#333">
            <rect x="1" y="3" width="9" height="9" rx="1.500" />
            <path d="M3.500 1H10q2 0 2 2v6.500" />
          </Icon>
        </IconButton>
        <IconButton $w={60} aria-label="Close">
          <Icon w={13} h={13} color="#333"><path d="M1 1l11 11M12 1L1 12" /></Icon>
        </IconButton>
      </WindowControls>
    </TitleBar>

    <TabRow>
      {TABS.map((tab) => (
        <RibbonTab key={tab} href="#" $active={tab === 'Home'}>{tab}</RibbonTab>
      ))}
      <TabAction>
        <CommentIcon />
        Comments
      </TabAction>
      <TabAction $primary>
        <ShareIcon />
        Share
        <Chevron color="#fff" />
      </TabAction>
    </TabRow>

    <RibbonPanel />

    <FormulaBar>
      <Field $w={125}>
        <input type="text" defaultValue="I3" aria-label="Name box" />
        <Chevron size={12} color="#555" />
      </Field>
      <Dots>⋮</Dots>
      <Field $w={105} $pad={4}>
        <IconButton $w={24} $h={28} aria-label="Cancel">
          <Icon w={16} h={16} color="#cf5a5e"><path d="M1 1l14 14M15 1L1 15" /></Icon>
        </IconButton>
        <IconButton $w={36} $h={28} aria-label="Enter">
          <Icon w={20} h={14} color="#8d8d8d" sw={1.6}><path d="M1 8l5 5L19 1" /></Icon>
        </IconButton>
        <IconButton $w={24} $h={28}><Fx>fx</Fx></IconButton>
        <Chevron size={12} sw={1.2} />
      </Field>
      <Divider $margin="0 3px" $h={1} />
      <Field>
        <FormulaInput type="text" defaultValue="=VLOOKUP(I$2,$A$1:$D$11,2,0" aria-label="Formula" />
        <Chevron size={12} color="#444" />
      </Field>
    </FormulaBar>

    <Workspace>
      <Sheet>
        <SheetGrid />
        <RangeOutline />
        <CellEditor>
          =VLOOKUP
          <b>
            (<span className="lookup">I$2</span>,<span className="range">$A$1:$D$11</span>,2,0)
          </b>
        </CellEditor>
        <EditEdge />
        <LookupOutline>
          <span />
          <span />
          <span />
          <span />
        </LookupOutline>
        <SyntaxTip>
          VLOOKUP(lookup_value, table_array, col_index_num, <b>[range_lookup]</b>)
        </SyntaxTip>
        <Cursor width="16" height="16" viewBox="0 0 16 16" fill="#fff" stroke="#2b1f22" strokeWidth="2">
          <path d="M5.500 1h5v4.500H15v5h-4.500V15h-5v-4.500H1v-5h4.500z" />
        </Cursor>
        <Copilot aria-label="Copilot"><CopilotIcon /></Copilot>
      </Sheet>
      <VerticalScroll>
        <Arrow $points="50% 0, 100% 90%, 0 90%" aria-label="Scroll up" />
        <Thumb $vertical />
        <Arrow $points="0 10%, 100% 10%, 50% 100%" aria-label="Scroll down" />
      </VerticalScroll>
    </Workspace>

    <SheetTabs>
      <IconButton $w={72} aria-label="Previous sheet">
        <Icon w={8} h={12} color="#444" sw={1.6}><path d="M7 1L2 6l5 5" /></Icon>
      </IconButton>
      <IconButton $w={10} aria-label="Next sheet">
        <Icon w={8} h={12} color="#777" sw={1.6}><path d="M1 1l5 5-5 5" /></Icon>
      </IconButton>
      <IconButton $w={60} aria-label="All sheets">
        <Icon w={14} h={4} color="none">
          <circle cx="2" cy="2" r="1.900" fill="#333" />
          <circle cx="7" cy="2" r="1.900" fill="#333" />
          <circle cx="12" cy="2" r="1.900" fill="#333" />
        </Icon>
      </IconButton>
      <SheetTab $active><span>7. Hàm tìm kiếm (Phần 1)</span></SheetTab>
      <SheetTab>8. Hàm tìm kiếm (Phần 2)</SheetTab>
      <IconButton $w={116} aria-label="New sheet">
        <Icon w={14} h={14} color="#333" sw={1.6}><path d="M7 0v14M0 7h14" /></Icon>
      </IconButton>
      <HorizontalScroll>
        <IconButton $w={46} $color="#333" aria-label="Resize"><b>⋮</b></IconButton>
        <Arrow $points="100% 0, 100% 100%, 10% 50%" aria-label="Scroll left" />
        <Thumb />
        <Arrow $points="0 0, 90% 50%, 0 100%" aria-label="Scroll right" />
      </HorizontalScroll>
    </SheetTabs>

    <StatusBar>
      Enter
      <IconButton $w={80} $h={20} aria-label="Record macro"><MacroIcon /></IconButton>
      <Views>
        <IconButton $w={18} $h={20} aria-label="Normal view"><NormalViewIcon /></IconButton>
        <IconButton $w={18} $h={20} aria-label="Page layout view"><PageViewIcon /></IconButton>
        <IconButton $w={18} $h={20} aria-label="Page break view"><BreakViewIcon /></IconButton>
      </Views>
      <Icon w={10} h={10} color="#6a6a6a" sw={1}><path d="M0 5.500h10" /></Icon>
      <ZoomSlider type="range" aria-label="Zoom" />
      <Icon w={10} h={10} color="#6a6a6a" sw={1}><path d="M0 5.500h10M5.500 0v10" /></Icon>
      <ZoomLevel>100%</ZoomLevel>
    </StatusBar>

    <Watermark>
      <WatermarkLogo />
      <strong>STARTTRAIN</strong>
      <span>THE NEXT ANALYST</span>
    </Watermark>
    <Shade />
    <Progress />
  </Window>
);

export default App;
